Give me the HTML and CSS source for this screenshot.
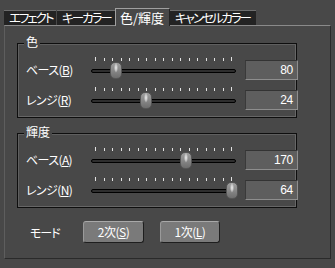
FILE: index.html
```html
<!DOCTYPE html>
<html lang="ja">
<head>
<meta charset="utf-8">
<link rel="stylesheet" href="styles.css">
</head>
<body>
<div class="tabs">
  <div class="tab kana t1">エフェクト</div>
  <div class="tab kana t2">キーカラー</div>
  <div class="tab t3 active">色/輝度</div>
  <div class="tab kana t4">キャンセルカラー</div>
</div>
<div class="panel">
  <div class="group">
    <span class="legend">色</span>
    <div class="row">
      <span class="label">ベース(<u>B</u>)</span>
      <div class="slider">
        <div class="ticks"><i></i><i></i><i></i><i></i><i></i><i></i><i></i><i></i><i></i><i></i><i></i><i></i><i></i><i></i><i></i><i></i><i></i></div>
        <div class="track"></div>
        <div class="thumb" style="left:19px"></div>
      </div>
      <div class="value">80</div>
    </div>
    <div class="row">
      <span class="label">レンジ(<u>R</u>)</span>
      <div class="slider">
        <div class="ticks"><i></i><i></i><i></i><i></i><i></i><i></i><i></i><i></i><i></i><i></i><i></i><i></i><i></i><i></i><i></i><i></i><i></i></div>
        <div class="track"></div>
        <div class="thumb" style="left:49px"></div>
      </div>
      <div class="value">24</div>
    </div>
  </div>
  <div class="group">
    <span class="legend">輝度</span>
    <div class="row">
      <span class="label">ベース(<u>A</u>)</span>
      <div class="slider">
        <div class="ticks"><i></i><i></i><i></i><i></i><i></i><i></i><i></i><i></i><i></i><i></i><i></i><i></i><i></i><i></i><i></i><i></i><i></i></div>
        <div class="track"></div>
        <div class="thumb" style="left:89px"></div>
      </div>
      <div class="value">170</div>
    </div>
    <div class="row">
      <span class="label">レンジ(<u>N</u>)</span>
      <div class="slider">
        <div class="ticks"><i></i><i></i><i></i><i></i><i></i><i></i><i></i><i></i><i></i><i></i><i></i><i></i><i></i><i></i><i></i><i></i><i></i></div>
        <div class="track"></div>
        <div class="thumb" style="left:135px"></div>
      </div>
      <div class="value">64</div>
    </div>
  </div>
  <div class="mode">
    <span class="mode-label">モード</span>
    <button class="btn">2次(<u>S</u>)</button>
    <button class="btn btn2">1次(<u>L</u>)</button>
  </div>
</div>
</body>
</html>
```

FILE: styles.css
```css
html, body {
  margin: 0;
  padding: 0;
}
body {
  width: 335px;
  height: 268px;
  overflow: hidden;
  background: #484848;
  color: #fff;
  font-family: "Noto Sans CJK JP", sans-serif;
}

.tabs {
  display: flex;
  align-items: flex-end;
  height: 25px;
  box-sizing: border-box;
  padding-left: 4px;
}
.tab {
  height: 15px;
  box-sizing: border-box;
  background: #232323;
  border-top: 1px solid #6e6e6e;
  font-size: 13px;
  line-height: 14px;
  padding-left: 5px;
  white-space: nowrap;
  font-feature-settings: "palt";
}
.tab.kana {
  font-size: 12.5px;
  letter-spacing: -2px;
}
.t1 { width: 52px; margin-right: 1px; }
.t2 { width: 58px; }
.t3 { width: 55px; }
.t4 { width: 86px; }
.tab.active {
  position: relative;
  z-index: 1;
  height: 18px;
  margin-bottom: -1px;
  background: #484848;
  border-top: 1px solid #a0a0a0;
  border-left: 1px solid #a0a0a0;
  border-right: 1px solid #222;
  padding-left: 4px;
  line-height: 18px;
}

.panel {
  margin-left: 4px;
  width: 327px;
  height: 234px;
  box-sizing: border-box;
  border-top: 1px solid #8a8a8a;
  border-left: 1px solid #5e5e5e;
  border-right: 1px solid #2a2a2a;
  border-bottom: 1px solid #2a2a2a;
  padding: 17px 0 0 12px;
}

.group {
  position: relative;
  width: 280px;
  height: 75px;
  box-sizing: border-box;
  border: 1px solid #0e0e0e;
  box-shadow: inset 1px 1px 0 #5f5f5f, inset -1px -1px 0 #666;
  padding-top: 12px;
}
.group + .group {
  margin-top: 15px;
}
.legend {
  position: absolute;
  top: -9px;
  left: 6px;
  padding: 0 2px;
  background: #484848;
  font-size: 12px;
  line-height: 14px;
}

.row {
  display: grid;
  grid-template-columns: 56px 145px 53px;
  column-gap: 9px;
  height: 30px;
  padding-left: 8px;
}
.label {
  font-size: 12px;
  line-height: 28px;
  letter-spacing: -0.6px;
  white-space: nowrap;
  font-feature-settings: "palt";
}
.label u, .btn u {
  text-underline-offset: 1px;
}

.slider {
  position: relative;
}
.ticks {
  display: flex;
  justify-content: space-between;
  align-items: flex-end;
  width: 137px;
  height: 4px;
  margin: 1px 0 0 4px;
}
.ticks i {
  display: block;
  width: 1px;
  height: 3px;
  background: #e2e2e2;
}
.ticks i:first-child,
.ticks i:last-child {
  height: 4px;
}
.track {
  margin-top: 8px;
  height: 4px;
  box-sizing: border-box;
  background: #2e2e2e;
  border: 1px solid #000;
  border-radius: 2px;
}
.thumb {
  position: absolute;
  top: 6px;
  width: 12px;
  height: 17px;
  box-sizing: border-box;
  border-radius: 5px;
  border: 1px solid #555;
  background:
    radial-gradient(ellipse 2px 5px at 50% 32%, #f0f0f0 0%, rgba(240,240,240,0.5) 60%, rgba(240,240,240,0) 100%),
    linear-gradient(to bottom, #a0a0a0 0%, #8a8a8a 45%, #6e6e6e 100%);
}

.value {
  margin-top: 4px;
  height: 20px;
  box-sizing: border-box;
  background: #5e5e5e;
  border-top: 1px solid #333;
  border-left: 1px solid #3a3a3a;
  border-bottom: 1px solid #8e8e8e;
  border-right: 1px solid #8e8e8e;
  text-align: right;
  padding-right: 4px;
  font-family: "Liberation Sans", sans-serif;
  font-size: 12px;
  letter-spacing: -0.3px;
  line-height: 18px;
}

.mode {
  display: flex;
  align-items: center;
  margin-top: 13px;
  padding-left: 13px;
}
.mode-label {
  width: 53px;
  font-size: 12px;
  letter-spacing: -1px;
  font-feature-settings: "palt";
}
.btn {
  width: 61px;
  height: 22px;
  box-sizing: border-box;
  padding: 0;
  background: #7a7a7a;
  border: 1px solid;
  border-color: #a8a8a8 #1e1e1e #1e1e1e #9a9a9a;
  border-radius: 3px;
  color: #fff;
  font-family: "Noto Sans CJK JP", sans-serif;
  font-size: 12px;
  line-height: 20px;
  letter-spacing: -0.5px;
  text-align: center;
  font-feature-settings: "palt";
}
.btn2 {
  width: 60px;
  margin-left: 16px;
}
```
